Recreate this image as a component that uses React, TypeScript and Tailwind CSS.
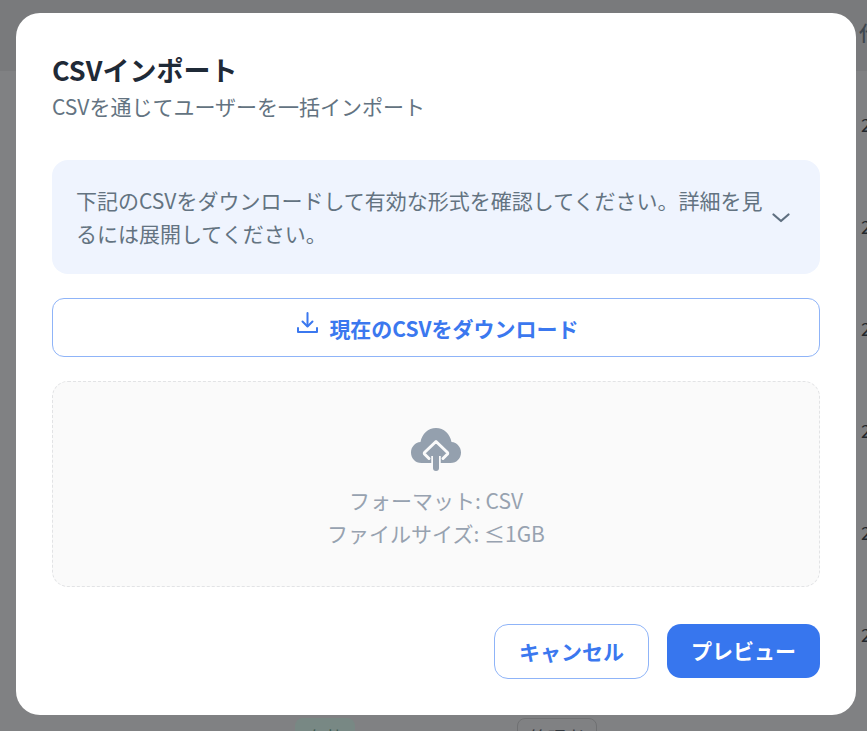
const rowTops = ['top-[111px]', 'top-[213px]', 'top-[315px]', 'top-[417px]', 'top-[519px]', 'top-[621px]', 'top-[723px]'];

function CloudUpload() {
  return (
    <svg width="50" height="44" viewBox="0 0 50 44" fill="none">
      <path
        d="M10.500 36C4 36 0 31 0 25.500C0 20 4 15.500 9.500 15C11 7 17 1 25 1C33 1 39 7 40.500 15C46 15.500 50 20 50 25.500C50 31 46 36 39.500 36Z"
        fill="#94a0ae"
      />
      <path
        d="M18 31.500L13.500 27Q13 26 13.500 25.500L25 14.500L36.500 25.500Q37 26 36.500 27L32 31.500"
        stroke="#fafafa"
        strokeWidth="3"
        strokeLinecap="round"
        strokeLinejoin="round"
      />
      <path d="M25 29V37" stroke="#fafafa" strokeWidth="9.500" />
      <path d="M25 23V41" stroke="#94a0ae" strokeWidth="6" strokeLinecap="round" />
    </svg>
  );
}

function DownloadIcon() {
  return (
    <svg width="21" height="21" viewBox="0 0 21 21" fill="none" stroke="#3b78ef" strokeWidth="2" strokeLinecap="round" strokeLinejoin="round">
      <path d="M10.500 1V14" />
      <path d="M5.500 9.500L10.500 14.500L15.500 9.500" />
      <path d="M1 16V20H20V16" />
    </svg>
  );
}

function Chevron() {
  return (
    <svg width="18" height="10" viewBox="0 0 18 10" fill="none" stroke="#5f6f80" strokeWidth="2.200" strokeLinecap="round" strokeLinejoin="round">
      <path d="M1.500 1.500L9 8L16.500 1.500" />
    </svg>
  );
}

export default function App() {
  return (
    <div className="relative h-[731px] w-[867px] overflow-hidden bg-[#808183] font-['Noto_Sans_CJK_JP','Noto_Sans',sans-serif]">
      {/* page behind the overlay */}
      <div className="absolute inset-x-0 top-0 h-[71px] bg-[#797a7c]" />
      <span className="absolute left-[859px] top-[18px] text-[20px] font-medium text-[#3f474f]">代</span>
      {rowTops.map((top) => (
        <span key={top} className={`absolute left-[861px] text-[18px] text-[#23282e] ${top}`}>2</span>
      ))}
      <span className="absolute left-[295px] top-[718px] flex h-[30px] w-[60px] justify-center rounded-lg bg-[#788884] pt-[6px] text-[18px] leading-[27px] text-[#3d5a50]">
        有効
      </span>
      <span className="absolute left-[517px] top-[718px] flex h-[30px] w-[80px] justify-center rounded-lg border border-[#6f7072] pt-[5px] text-[18px] leading-[27px] text-[#33383d]">
        管理者
      </span>

      <div className="absolute left-[16px] top-[13px] flex h-[702px] w-[840px] flex-col rounded-[24px] bg-white px-[36px] pt-[37px]">
        <h2 className="text-[27px] font-bold leading-[40px] text-[#1f2a37]">CSVインポート</h2>
        <p className="text-[21px] leading-[32px] text-[#637381]">CSVを通じてユーザーを一括インポート</p>

        <div className="mt-[38px] flex h-[114px] items-center gap-[8px] rounded-[16px] bg-[#eff4fe] pl-[24px] pr-[30px]">
          <p className="flex-1 text-[21px] leading-[33px] text-[#637381]">
            下記のCSVをダウンロードして有効な形式を確認してください。詳細を見るには展開してください。
          </p>
          <span className="mt-[2px]">
            <Chevron />
          </span>
        </div>

        <button className="mt-[24px] flex h-[59px] w-full items-center justify-center gap-[11px] rounded-[12px] border border-[#8fb4f8] bg-white pl-[4px] pt-[3px] text-[21px] font-bold text-[#3b78ef]">
          <span className="mb-[13px]">
            <DownloadIcon />
          </span>
          現在のCSVをダウンロード
        </button>

        <div className="mt-[24px] flex h-[206px] flex-col items-center rounded-[16px] border border-dashed border-[#e2e3e5] bg-[#fafafa] pt-[45px]">
          <CloudUpload />
          <p className="mt-[13px] text-[21px] leading-[33px] text-[#97a2b0]">フォーマット: CSV</p>
          <p className="text-[21px] leading-[33px] text-[#97a2b0]">ファイルサイズ: ≤1GB</p>
        </div>

        <div className="mt-[37px] flex justify-end gap-[18px]">
          <button className="flex h-[55px] w-[155px] items-center justify-center rounded-[14px] border border-[#8fb4f8] bg-white text-[21px] font-bold text-[#3b78ef]">
            キャンセル
          </button>
          <button className="flex h-[54px] w-[153px] items-center justify-center rounded-[14px] bg-[#3776ee] text-[21px] font-bold text-white">
            プレビュー
          </button>
        </div>
      </div>
    </div>
  );
}
